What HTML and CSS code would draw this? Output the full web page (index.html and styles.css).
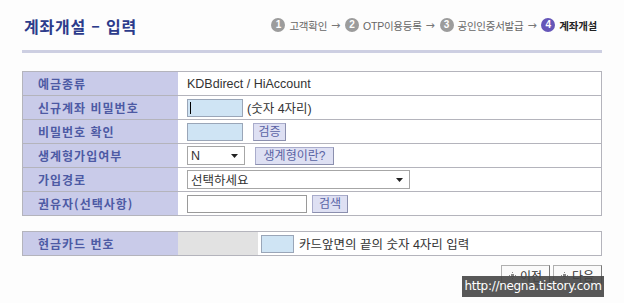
FILE: index.html
```html
<!DOCTYPE html>
<html lang="ko">
<head>
<meta charset="utf-8">
<link rel="stylesheet" href="styles.css">
</head>
<body>
<div class="page">
  <div class="header">
    <h1 class="title">계좌개설 – 입력</h1>
    <div class="steps">
      <span class="num">1</span><span class="step">고객확인</span><span class="arrow">→</span>
      <span class="num">2</span><span class="step">OTP이용등록</span><span class="arrow">→</span>
      <span class="num">3</span><span class="step">공인인증서발급</span><span class="arrow">→</span>
      <span class="num cur">4</span><span class="step cur">계좌개설</span>
    </div>
  </div>

  <div class="form">
    <div class="row">
      <div class="label">예금종류</div>
      <div class="value">KDBdirect / HiAccount</div>
    </div>
    <div class="row">
      <div class="label">신규계좌 비밀번호</div>
      <div class="value"><span class="inp blue w56"><span class="caret"></span></span><span class="note">(숫자 4자리)</span></div>
    </div>
    <div class="row">
      <div class="label">비밀번호 확인</div>
      <div class="value"><span class="inp blue w56"></span><span class="btn b-verify">검증</span></div>
    </div>
    <div class="row">
      <div class="label">생계형가입여부</div>
      <div class="value"><span class="sel w58"><span class="sel-text">N</span><svg class="tri" width="7" height="4" viewBox="0 0 7 4"><path d="M0 0H7L3.5 4Z" fill="#222"/></svg></span><span class="btn b-what">생계형이란?</span></div>
    </div>
    <div class="row">
      <div class="label">가입경로</div>
      <div class="value"><span class="sel w223"><span class="sel-text">선택하세요</span><svg class="tri" width="7" height="4" viewBox="0 0 7 4"><path d="M0 0H7L3.5 4Z" fill="#222"/></svg></span></div>
    </div>
    <div class="row">
      <div class="label">권유자(선택사항)</div>
      <div class="value"><span class="inp white w119"></span><span class="btn b-search">검색</span></div>
    </div>
  </div>

  <div class="form form2">
    <div class="row">
      <div class="label">현금카드 번호</div>
      <div class="value v2"><span class="mask"></span><span class="inp blue w33"></span><span class="note2">카드앞면의 끝의 숫자 4자리 입력</span></div>
    </div>
  </div>

  <div class="actions">
    <span class="nav"><svg width="7" height="7" viewBox="0 0 7 7"><g fill="#888"><rect x="3" y="0" width="1" height="1"/><rect x="3" y="6" width="1" height="1"/><rect x="0" y="3" width="1" height="1"/><rect x="6" y="3" width="1" height="1"/><rect x="2" y="2" width="3" height="3"/></g></svg>이전</span>
    <span class="nav"><svg width="7" height="7" viewBox="0 0 7 7"><g fill="#888"><rect x="3" y="0" width="1" height="1"/><rect x="3" y="6" width="1" height="1"/><rect x="0" y="3" width="1" height="1"/><rect x="6" y="3" width="1" height="1"/><rect x="2" y="2" width="3" height="3"/></g></svg>다음</span>
  </div>
  <div class="watermark">http://negna.tistory.com</div>
</div>
</body>
</html>
```

FILE: styles.css
```css
html, body {
  margin: 0;
  padding: 0;
  background: #fdfdfd;
}
body {
  width: 624px;
  height: 303px;
  overflow: hidden;
  font-family: "Liberation Sans", "Noto Sans CJK KR", sans-serif;
  position: relative;
}
.page {
  padding: 0 22px;
  position: relative;
  height: 303px;
  box-sizing: border-box;
}
.header {
  height: 50px;
  display: flex;
  align-items: center;
  justify-content: space-between;
  border-bottom: 3px solid #cdcfe2;
}
.title {
  margin: 2px 0 0 2px;
  font-family: "Noto Sans CJK KR", sans-serif;
  font-size: 16px;
  font-weight: bold;
  color: #2c3b8b;
  letter-spacing: 0.8px;
  line-height: 20px;
}
.steps {
  display: flex;
  align-items: center;
  margin-right: 5px;
  font-size: 10.5px;
  color: #666;
  letter-spacing: -0.25px;
}
.num {
  width: 14px;
  height: 14px;
  border-radius: 50%;
  background: #9c9c9c;
  color: #fff;
  font-family: "Liberation Sans", sans-serif;
  font-weight: bold;
  font-size: 10px;
  line-height: 14px;
  text-align: center;
  letter-spacing: 0;
  margin-right: 4px;
}
.num.cur {
  background: #6556b8;
}
.step.cur {
  font-weight: bold;
  color: #222;
}
.arrow {
  font-family: "DejaVu Sans", sans-serif;
  font-size: 11px;
  margin: 0 5px 0 4px;
  color: #777;
}
.form {
  margin-top: 18px;
  border: 1px solid #b4b4bc;
  border-top: none;
  width: 580px;
  box-sizing: border-box;
}
.form2 {
  margin-top: 15px;
}
.row {
  display: flex;
  height: 24px;
  border-top: 1px solid #b4b4bc;
  box-sizing: border-box;
}
.label {
  width: 155px;
  flex: none;
  background: #c9cbe9;
  color: #4d5aa4;
  font-family: "Noto Sans CJK KR", sans-serif;
  font-size: 12px;
  font-weight: bold;
  letter-spacing: 1px;
  padding-left: 15px;
  box-sizing: border-box;
  line-height: 23px;
}
.value {
  flex: 1;
  display: flex;
  align-items: center;
  padding-left: 9px;
  font-size: 12.5px;
  color: #333;
  background: #fff;
}
.inp {
  height: 18px;
  box-sizing: border-box;
  border: 1px solid #9aa6b8;
  display: inline-flex;
  align-items: center;
}
.blue { background: #cfe4f4; }
.white { background: #fff; border-color: #9a9a9a; }
.w56 { width: 56px; }
.w33 { width: 33px; }
.w119 { width: 120px; }
.caret {
  width: 1px;
  height: 12px;
  background: #000;
  margin-left: 2px;
}
.note { margin-left: 4px; }
.btn {
  height: 18px;
  box-sizing: border-box;
  border: 1px solid #a9accb;
  border-right-color: #8b8fae;
  border-bottom-color: #8b8fae;
  background: #dee0f3;
  color: #5963a4;
  font-size: 12px;
  line-height: 16px;
  text-align: center;
  display: inline-block;
}
.b-verify { width: 33px; margin-left: 10px; }
.b-what { width: 79px; margin-left: 10px; }
.b-search { width: 36px; margin-left: 5px; }
.sel {
  height: 19px;
  box-sizing: border-box;
  border: 1px solid #a6a6a6;
  background: #fff;
  display: inline-flex;
  align-items: center;
  justify-content: space-between;
  padding: 0 6px 0 3px;
  color: #333;
}
.w58 { width: 58px; }
.w223 { width: 223px; }
.v2 { padding-left: 0; }
.mask {
  width: 80px;
  height: 23px;
  background: #e2e2e2;
  margin-right: 3px;
}
.note2 { margin-left: 5px; }
.actions {
  margin-top: 9px;
  width: 580px;
  display: flex;
  justify-content: flex-end;
  gap: 3px;
}
.nav {
  width: 49px;
  height: 20px;
  box-sizing: border-box;
  border: 1px solid #b0b0b0;
  border-right-color: #7a7a7a;
  border-bottom-color: #7a7a7a;
  background: #fafafa;
  font-size: 12px;
  color: #333;
  display: flex;
  align-items: center;
  justify-content: center;
  gap: 4px;
}
.watermark {
  position: absolute;
  left: 462px;
  top: 276px;
  width: 142px;
  height: 21px;
  background: rgba(70, 70, 70, 0.9);
  color: #fff;
  font-family: "DejaVu Sans", sans-serif;
  font-size: 12px;
  line-height: 21px;
  text-align: center;
  letter-spacing: -0.3px;
}
```
